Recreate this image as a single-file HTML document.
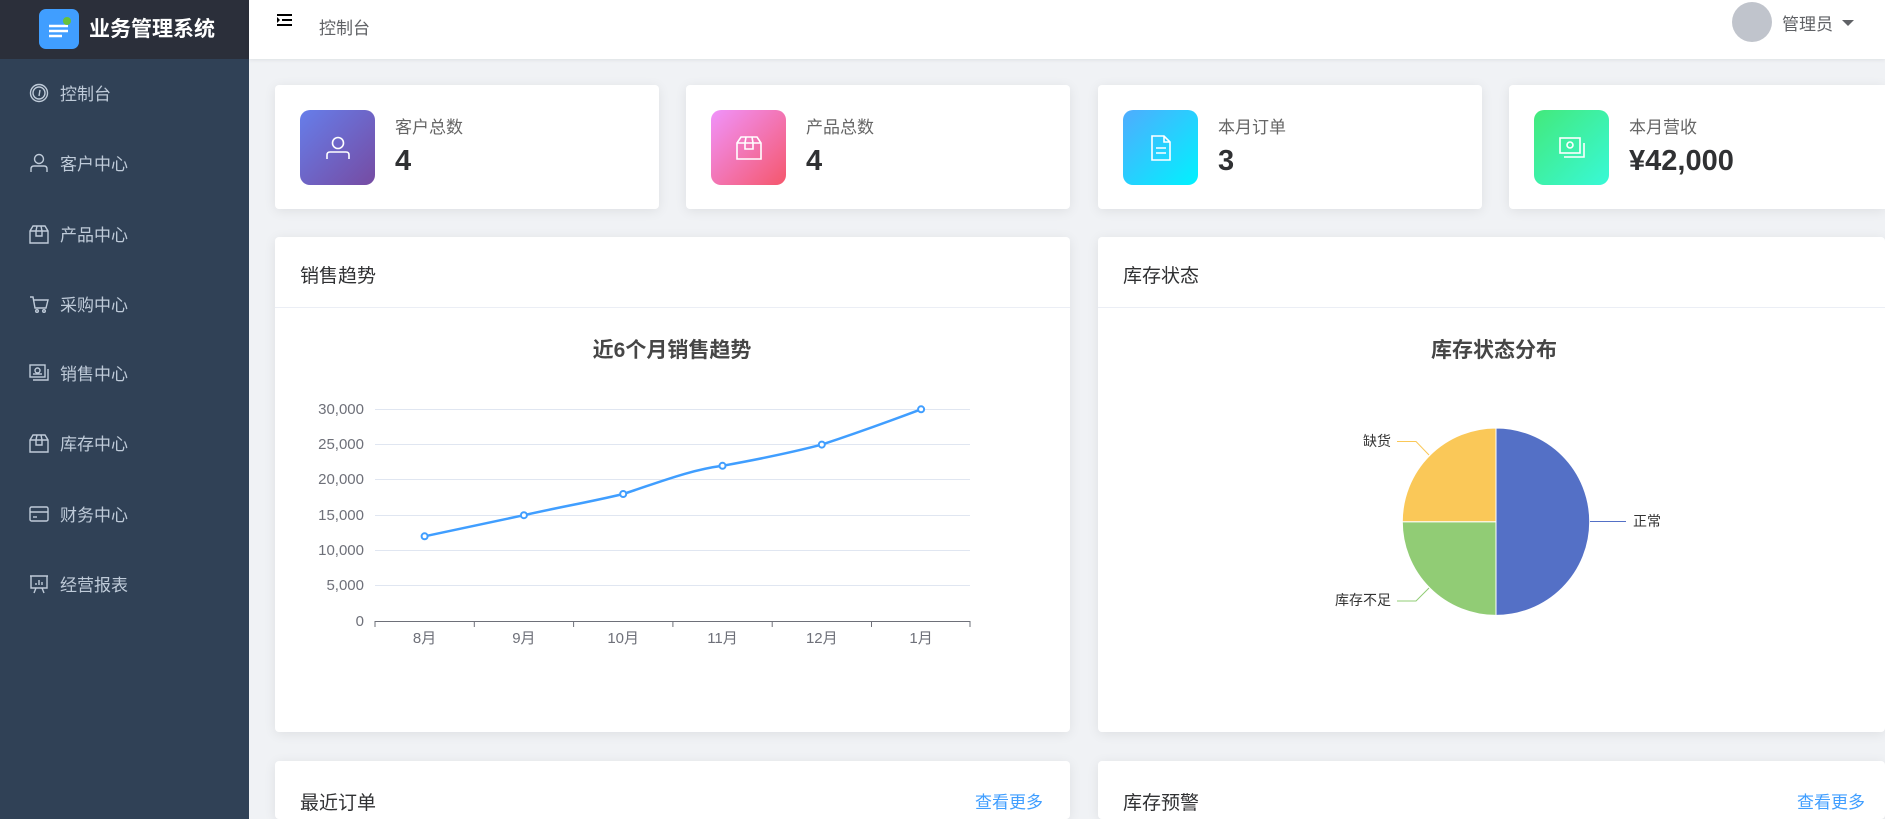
<!DOCTYPE html>
<html><head><meta charset="utf-8"><style>
*{margin:0;padding:0;box-sizing:border-box}
html{width:1885px;height:819px;overflow:hidden}
body{width:1885px;height:819px;overflow:hidden;background:#f0f2f5;font-family:"Liberation Sans","Noto Sans CJK SC",sans-serif;position:relative}
.sb{position:absolute;left:0;top:0;width:249px;height:819px;background:#304156}
.logo{position:absolute;left:0;top:0;width:249px;height:59px;background:#2b2f3a}
.logo .ic{position:absolute;left:39px;top:9px;width:40px;height:40px;border-radius:7px;background:#409eff}
.logo .t{position:absolute;left:89px;top:13px;color:#fff;font-size:21px;font-weight:bold}
.mi{position:absolute;left:0;width:249px;height:30px;color:#bfcbd9;font-size:17px}
.mi svg{position:absolute;left:29px;top:5px}
.mi span{position:absolute;left:60px;top:2px}
.hd{position:absolute;left:249px;top:0;right:0;height:59px;background:#fff;box-shadow:0 1px 4px rgba(0,21,41,.08)}
.card{position:absolute;background:#fff;border-radius:4px;box-shadow:0 2px 12px rgba(0,0,0,.08)}
.stat{top:85px;width:384px;height:124px}
.stat .b{position:absolute;left:25px;top:25px;width:75px;height:75px;border-radius:10px}
.stat .b svg{position:absolute;left:24px;top:24px}
.stat .l{position:absolute;left:120px;top:28px;font-size:17px;color:#666}
.stat .v{position:absolute;left:120px;top:60px;font-size:29px;font-weight:bold;color:#303133}
.ch .h{position:absolute;left:0;right:0;top:0;height:71px;border-bottom:1px solid #ebeef5}
.ch .h span{position:absolute;left:25px;top:24px;font-size:19px;color:#303133}
.more{position:absolute;top:27px;font-size:17px;color:#409eff}
</style></head><body>
<div class="sb">
<div class="logo"><div class="ic"><svg width="40" height="40"><g stroke="#fff" stroke-width="2.5"><line x1="10" y1="17" x2="29" y2="17"/><line x1="10" y1="22" x2="29" y2="22"/><line x1="10" y1="27" x2="23" y2="27"/></g><circle cx="28" cy="12" r="4" fill="#67c23a"/></svg></div><div class="t">业务管理系统</div></div>
<div class="mi" style="top:78px"><svg width="20" height="20" fill="none" stroke="#bfcbd9" stroke-width="1.4"><circle cx="10" cy="10" r="8.5"/><circle cx="10" cy="10" r="6"/><line x1="10" y1="13" x2="11" y2="7"/></svg><span>控制台</span></div>
<div class="mi" style="top:148px"><svg width="20" height="20" fill="none" stroke="#bfcbd9" stroke-width="1.4"><circle cx="10" cy="6" r="4.5"/><path d="M2 19v-3q0-3 3-3h10q3 0 3 3v3"/></svg><span>客户中心</span></div>
<div class="mi" style="top:219px"><svg width="20" height="20" fill="none" stroke="#bfcbd9" stroke-width="1.4"><path d="M1 7l3-5h12l3 5v12H1z M1 7h18 M8 2l-1 5v5h6V7l-1-5"/></svg><span>产品中心</span></div>
<div class="mi" style="top:289px"><svg width="20" height="20" fill="none" stroke="#bfcbd9" stroke-width="1.4"><path d="M1 3h3l2 11h11l2-8H5"/><circle cx="8" cy="17" r="1.3"/><circle cx="15" cy="17" r="1.3"/></svg><span>采购中心</span></div>
<div class="mi" style="top:358px"><svg width="20" height="20" fill="none" stroke="#bfcbd9" stroke-width="1.4"><rect x="1" y="2" width="15" height="12"/><path d="M4 17h15V6"/><circle cx="8.5" cy="7.5" r="2.5"/><line x1="4" y1="11" x2="13" y2="11"/></svg><span>销售中心</span></div>
<div class="mi" style="top:428px"><svg width="20" height="20" fill="none" stroke="#bfcbd9" stroke-width="1.4"><path d="M1 7l3-5h12l3 5v12H1z M1 7h18 M8 2l-1 5v5h6V7l-1-5"/></svg><span>库存中心</span></div>
<div class="mi" style="top:499px"><svg width="20" height="20" fill="none" stroke="#bfcbd9" stroke-width="1.4"><rect x="1" y="3" width="18" height="14" rx="1.5"/><line x1="1" y1="8" x2="19" y2="8"/><line x1="4" y1="13" x2="8" y2="13"/></svg><span>财务中心</span></div>
<div class="mi" style="top:569px"><svg width="20" height="20" fill="none" stroke="#bfcbd9" stroke-width="1.4"><path d="M1 2h18 M2 2v12h16V2 M7 14l-2 5 M13 14l2 5 M7 11V9 M10 11V6 M13 11V8"/></svg><span>经营报表</span></div>
</div>
<div class="hd">
<svg style="position:absolute;left:28px;top:14px" width="16" height="14" fill="#000"><rect x="0" y="0" width="15" height="2"/><rect x="5" y="5" width="10" height="2"/><rect x="0" y="10" width="15" height="2"/><path d="M0 3l3 3-3 3z"/></svg>
<div style="position:absolute;left:70px;top:14px;font-size:17px;color:#606266">控制台</div>
<div style="position:absolute;left:1483px;top:2px;width:40px;height:40px;border-radius:50%;background:#c0c4cc"></div>
<div style="position:absolute;left:1533px;top:10px;font-size:17px;color:#606266">管理员</div>
<div style="position:absolute;left:1593px;top:20px;border-left:6px solid transparent;border-right:6px solid transparent;border-top:6px solid #606266"></div>
</div>

<div class="card stat" style="left:275px"><div class="b" style="background:linear-gradient(135deg,#667eea,#764ba2)"><svg width="28" height="28" fill="none" stroke="#fff" stroke-width="1.6"><circle cx="14" cy="9" r="5.5"/><path d="M3 25v-4q0-3 3-3h16q3 0 3 3v4"/></svg></div><div class="l">客户总数</div><div class="v">4</div></div>
<div class="card stat" style="left:686px"><div class="b" style="background:linear-gradient(135deg,#f093fb,#f5576c)"><svg width="28" height="28" fill="none" stroke="#fff" stroke-width="1.6"><path d="M2 9l4-6h16l4 6v16H2z M2 9h24 M11 3l-1 6v6h8V9l-1-6"/></svg></div><div class="l">产品总数</div><div class="v">4</div></div>
<div class="card stat" style="left:1098px"><div class="b" style="background:linear-gradient(135deg,#4facfe,#00f2fe)"><svg width="28" height="28" fill="none" stroke="#fff" stroke-width="1.6"><path d="M5 2h12l6 6v18H5z M17 2v6h6 M9 14h10 M9 19h10"/></svg></div><div class="l">本月订单</div><div class="v">3</div></div>
<div class="card stat" style="left:1509px;width:376px;border-radius:4px 0 0 4px"><div class="b" style="background:linear-gradient(135deg,#43e97b,#38f9d7)"><svg width="28" height="28" fill="none" stroke="#fff" stroke-width="1.6"><rect x="2" y="4" width="20" height="15"/><path d="M6 23h20V9"/><circle cx="12" cy="11" r="3"/></svg></div><div class="l">本月营收</div><div class="v">¥42,000</div></div>

<div class="card ch" style="left:275px;top:237px;width:795px;height:495px"><div class="h"><span>销售趋势</span></div></div>
<div class="card ch" style="left:1098px;top:237px;width:787px;height:495px"><div class="h"><span>库存状态</span></div></div>
<div class="card ch" style="left:275px;top:761px;width:795px;height:58px"><div class="h" style="border-bottom:none"><span style="top:27px">最近订单</span><div class="more" style="left:700px">查看更多</div></div></div>
<div class="card ch" style="left:1098px;top:761px;width:787px;height:58px"><div class="h" style="border-bottom:none"><span style="top:27px">库存预警</span><div class="more" style="left:699px">查看更多</div></div></div>

<svg style="position:absolute;left:0;top:0" width="1885" height="819" font-family="Liberation Sans, Noto Sans CJK SC, sans-serif">
<text x="672" y="357" text-anchor="middle" font-size="21" font-weight="bold" fill="#464646">近6个月销售趋势</text>
<text x="1494" y="357" text-anchor="middle" font-size="21" font-weight="bold" fill="#464646">库存状态分布</text>
<g stroke="#e0e6f1" stroke-width="1">
<line x1="375" y1="409.5" x2="970" y2="409.5"/><line x1="375" y1="444.5" x2="970" y2="444.5"/><line x1="375" y1="479.5" x2="970" y2="479.5"/><line x1="375" y1="515.5" x2="970" y2="515.5"/><line x1="375" y1="550.5" x2="970" y2="550.5"/><line x1="375" y1="585.5" x2="970" y2="585.5"/></g>
<g stroke="#6e7079"><line x1="375" y1="621.5" x2="970" y2="621.5"/>
<line x1="375" y1="621" x2="375" y2="627"/><line x1="474.3" y1="621" x2="474.3" y2="627"/><line x1="573.6" y1="621" x2="573.6" y2="627"/><line x1="672.9" y1="621" x2="672.9" y2="627"/><line x1="772.2" y1="621" x2="772.2" y2="627"/><line x1="871.5" y1="621" x2="871.5" y2="627"/><line x1="970" y1="621" x2="970" y2="627"/></g>
<g font-size="15" fill="#6e7079" text-anchor="end">
<text x="364" y="414">30,000</text><text x="364" y="449">25,000</text><text x="364" y="484">20,000</text><text x="364" y="520">15,000</text><text x="364" y="555">10,000</text><text x="364" y="590">5,000</text><text x="364" y="626">0</text></g>
<g font-size="15" fill="#6e7079" text-anchor="middle">
<text x="424.6" y="643">8月</text><text x="523.9" y="643">9月</text><text x="623.2" y="643">10月</text><text x="722.5" y="643">11月</text><text x="821.8" y="643">12月</text><text x="921.1" y="643">1月</text></g>
<path d="M424.6 536.3 L523.9 515.2 C560 507 590 502 623.2 494 C660 482 690 470 722.5 465.8 C760 459 790 453 821.8 444.6 C860 432 890 421 921.1 409.3" fill="none" stroke="#409eff" stroke-width="2.5"/>
<g fill="#fff" stroke="#409eff" stroke-width="2"><circle cx="424.6" cy="536.3" r="3"/><circle cx="523.9" cy="515.2" r="3"/><circle cx="623.2" cy="494" r="3"/><circle cx="722.5" cy="465.8" r="3"/><circle cx="821.8" cy="444.6" r="3"/><circle cx="921.1" cy="409.3" r="3"/></g>
<path d="M1496 521.7 L1496 428 A93.7 93.7 0 0 1 1496 615.4 Z" fill="#5470c6" stroke="#fff" stroke-width="1"/>
<path d="M1496 521.7 L1496 615.4 A93.7 93.7 0 0 1 1402.3 521.7 Z" fill="#91cc75" stroke="#fff" stroke-width="1"/>
<path d="M1496 521.7 L1402.3 521.7 A93.7 93.7 0 0 1 1496 428 Z" fill="#fac858" stroke="#fff" stroke-width="1"/>
<polyline points="1590,521.5 1626,521.5" fill="none" stroke="#5470c6"/>
<polyline points="1429,455 1416,441.5 1397,441.5" fill="none" stroke="#fac858"/>
<polyline points="1429,588 1416,601 1397,601" fill="none" stroke="#91cc75"/>
<g font-size="14" fill="#333"><text x="1633" y="526">正常</text><text x="1391" y="446" text-anchor="end">缺货</text><text x="1391" y="605" text-anchor="end">库存不足</text></g>
</svg>
</body></html>
